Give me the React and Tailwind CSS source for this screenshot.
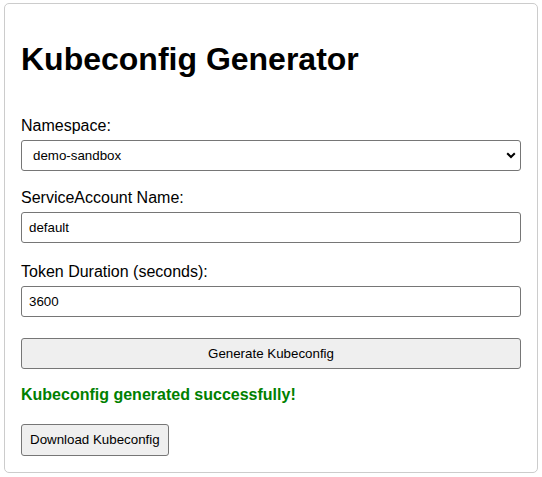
import { useState } from "react";

const fieldClass =
  "block w-full h-[31px] rounded-[3px] border border-[#767676] bg-white px-[7px] text-[13.333px] text-black outline-none";

function App() {
  const [namespace, setNamespace] = useState("demo-sandbox");
  const [sa, setSa] = useState("default");
  const [duration, setDuration] = useState("3600");

  return (
    <div className="min-h-[477px] bg-white pt-[3px] px-[4px] font-['Liberation_Sans',Arial,sans-serif] text-black">
      <div className="w-[534px] rounded-[5px] border border-[#cccccc] p-4">
        <h1 className="mt-[21px] mb-[39px] text-[32px] font-bold leading-[37px]">
          Kubeconfig Generator
        </h1>

        <div>
          <label className="mb-[5px] block text-[16px] leading-[18px]">
            Namespace:
          </label>
          <div className="relative">
            <select
              value={namespace}
              onChange={(e) => setNamespace(e.target.value)}
              className={`${fieldClass} appearance-none pl-[11px]`}
            >
              <option value="demo-sandbox">demo-sandbox</option>
              <option value="default">default</option>
            </select>
            <svg
              className="pointer-events-none absolute right-[5px] top-[12px]"
              width="10"
              height="7"
              viewBox="0 0 10 7"
            >
              <path
                d="M1.2 1.2 L5 5 L8.8 1.2"
                fill="none"
                stroke="#000"
                strokeWidth="2"
              />
            </svg>
          </div>
        </div>

        <div className="mt-[18px]">
          <label className="mb-[5px] block text-[16px] leading-[18px]">
            ServiceAccount Name:
          </label>
          <input
            type="text"
            value={sa}
            onChange={(e) => setSa(e.target.value)}
            className={fieldClass}
          />
        </div>

        <div className="mt-[20px]">
          <label className="mb-[5px] block text-[16px] leading-[18px]">
            Token Duration (seconds):
          </label>
          <input
            type="number"
            value={duration}
            onChange={(e) => setDuration(e.target.value)}
            className={`${fieldClass} [appearance:textfield]`}
          />
        </div>

        <button
          type="button"
          className="mt-[21px] block h-[31px] w-full rounded-[3px] border border-[#767676] bg-[#efefef] text-[13.333px]"
        >
          Generate Kubeconfig
        </button>

        <p className="mt-[17px] text-[16px] font-bold leading-[18px] text-[#008000]">
          Kubeconfig generated successfully!
        </p>

        <button
          type="button"
          className="mt-[20px] block h-[32px] rounded-[3px] border border-[#767676] bg-[#efefef] px-[8px] text-[13.333px]"
        >
          Download Kubeconfig
        </button>
      </div>
    </div>
  );
}

export default App;
